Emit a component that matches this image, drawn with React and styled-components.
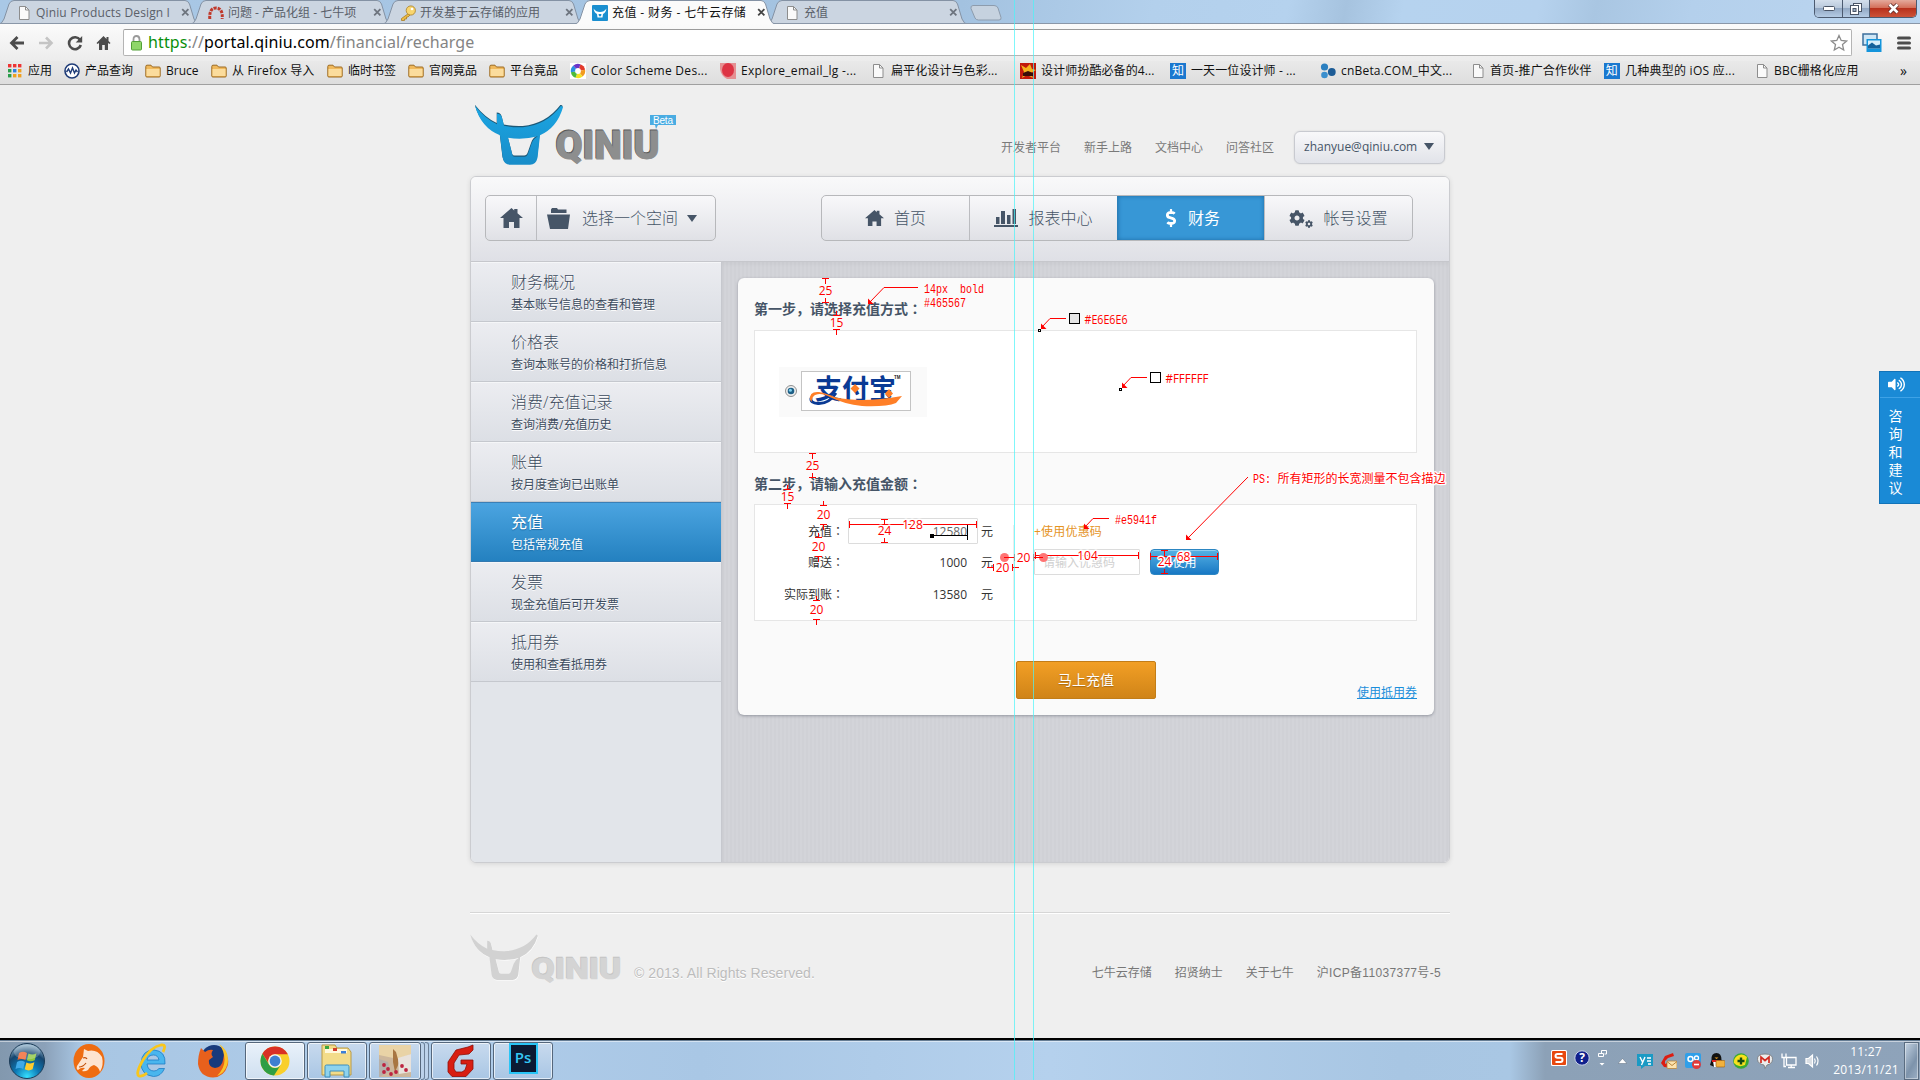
import React from 'react';
import styled, { createGlobalStyle, css } from 'styled-components';
import { FaCog, FaDollarSign, FaVolumeUp } from 'react-icons/fa';

const UI = `"Open Sans", "Noto Sans CJK SC", sans-serif`;
const MONO = `"Liberation Mono", "Noto Sans CJK SC", monospace`;

const Global = createGlobalStyle`
  html, body { margin: 0; padding: 0; overflow: hidden; }
  body { font-family: ${UI}; font-size: 12px; color: #333; }
  * { box-sizing: border-box; }
  svg { display: block; flex: none; }
`;

const Desktop = styled.div`
  position: relative;
  width: 1920px;
  height: 1080px;
  display: flex;
  flex-direction: column;
  overflow: hidden;
  background: #000;
`;

/* ---------- browser chrome ---------- */

const TabStrip = styled.div`
  display: flex;
  align-items: flex-start;
  height: 24px;
  flex: none;
  padding-left: 3px;
  background: linear-gradient(100deg, #a9c8e6 0%, #a3c2e0 50%, #b3d0ec 60%, #b5d2ee 67%, #a6c3df 70%, #b6d3ef 73%, #b6d2ee 80%, #a9c6e2 83%, #b4d0ec 88%, #bcd6f0 100%);
  box-shadow: inset 0 -1px 0 #8a97a8;
`;

const TabBox = styled.div`
  position: relative;
  display: flex;
  align-items: center;
  width: 192px;
  height: 24px;
  padding: 1px 5px 0 13px;
  color: ${(p) => (p.$active ? '#111' : '#5a6069')};
  line-height: 18px;
  z-index: ${(p) => (p.$active ? 2 : 1)};
`;

const TabShape = styled.svg`
  position: absolute;
  left: -5px;
  top: 0;
  z-index: -1;
`;

const TabLabel = styled.span`
  flex: 1;
  margin-left: 4px;
  overflow: hidden;
  white-space: nowrap;
  letter-spacing: ${(p) => p.$ls || 0}px;
`;

const TabClose = styled.svg`
  margin-left: 8px;
`;

const NewTab = styled.svg`
  margin: 5px 0 0 7px;
`;

const WindowButtons = styled.div`
  display: flex;
  margin-left: auto;
  margin-right: 3px;
  height: 18px;
  border: 1px solid #4c5b70;
  border-top: 0;
  border-radius: 0 0 5px 5px;
  overflow: hidden;
`;

const WindowButton = styled.div`
  display: flex;
  align-items: center;
  justify-content: center;
  width: ${(p) => p.$w}px;
  border-left: ${(p) => (p.$first ? 0 : '1px solid #4c5b70')};
  background: ${(p) =>
    p.$close
      ? 'linear-gradient(#e4aa9c 0%, #d4705a 45%, #b8311c 50%, #cc5238 100%)'
      : 'linear-gradient(#d3dfec 0%, #b9c9dc 45%, #93a9c4 50%, #b4cbe4 100%)'};
`;

const Toolbar = styled.div`
  display: flex;
  align-items: center;
  flex: none;
  height: 37px;
  padding: 0 8px 0 9px;
  background: linear-gradient(#fbfbfb, #ececec);
`;

const NavIcons = styled.div`
  display: flex;
  gap: 13px;
  width: 114px;
`;

const Omnibox = styled.div`
  display: flex;
  align-items: center;
  width: 1729px;
  height: 27px;
  padding: 0 3px 0 7px;
  border: 1px solid #b4b4b4;
  border-top-color: #9b9b9b;
  border-radius: 2px;
  background: #fff;
`;

const Url = styled.span`
  flex: 1;
  margin: -2px 0 0 6px;
  font-family: "Noto Sans", sans-serif;
  font-size: 16px;
  line-height: 22px;
  letter-spacing: 0.12px;
  color: #848484;
  b { font-weight: 400; color: #0a8f0a; }
  i { font-style: normal; color: #000; }
`;

const ToolEnd = styled.div`
  display: flex;
  align-items: center;
  gap: 15px;
  margin-left: 10px;
`;

const BookmarkBar = styled.div`
  display: flex;
  align-items: center;
  flex: none;
  height: 24px;
  padding: 0 0 3px 8px;
  background: linear-gradient(#e9e9e9, #dedede);
  border-bottom: 1px solid #a0a0a0;
  color: #111;
`;

const Bookmark = styled.div`
  display: flex;
  align-items: center;
  gap: ${(p) => p.$gap || 5}px;
  width: ${(p) => p.$w}px;
  flex: none;
  line-height: 18px;
  white-space: nowrap;
  letter-spacing: ${(p) => p.$ls || 0}px;
`;

const BookmarkMore = styled.span`
  margin-left: -3px;
  font-size: 14px;
  line-height: 16px;
`;

const ZhiIcon = styled.span`
  width: 16px;
  height: 16px;
  background: #1a78cf;
  color: #fff;
  font-size: 12px;
  line-height: 16px;
  text-align: center;
`;

/* ---------- page ---------- */

const Page = styled.main`
  flex: none;
  height: 953px;
  background: #efefef;
  display: flex;
  flex-direction: column;
  align-items: center;
`;

const Column = styled.div`
  width: 980px;
`;

const Header = styled.header`
  display: flex;
  align-items: flex-start;
  height: 91px;
  padding: 20px 5px 0;
`;

const HeaderLinks = styled.nav`
  display: flex;
  gap: 23px;
  margin: 34px 20px 0 auto;
  color: #7a7a7a;
  line-height: 18px;
`;

const UserMenu = styled.div`
  display: flex;
  align-items: center;
  justify-content: space-between;
  width: 151px;
  height: 33px;
  margin-top: 26px;
  padding: 0 10px 2px 9px;
  border: 1px solid #c8cad0;
  border-radius: 6px;
  background: linear-gradient(#f8f8fa, #e1e3e9);
  box-shadow: 0 0 2px rgba(0, 0, 0, 0.12);
  color: #465567;
`;

const Panel = styled.section`
  height: 687px;
  border: 1px solid #cbccd0;
  border-radius: 6px;
  overflow: hidden;
  display: flex;
  flex-direction: column;
  box-shadow: 0 1px 5px rgba(0, 0, 0, 0.1);
`;

const PanelHead = styled.div`
  display: flex;
  justify-content: space-between;
  height: 85px;
  flex: none;
  padding: 18px 36px 0 14px;
  background: linear-gradient(#f9f9fa, #dfe0e6);
  border-bottom: 1px solid #c6c7cc;
`;

const Group = styled.div`
  display: flex;
  height: 46px;
  border: 1px solid #b7b8bb;
  border-radius: 5px;
  background: linear-gradient(#f8f8fa, #e0e1e6);
  overflow: hidden;
`;

const Segment = styled.div`
  display: flex;
  align-items: center;
  justify-content: ${(p) => (p.$left ? 'flex-start' : 'center')};
  gap: ${(p) => p.$gap || 10}px;
  width: ${(p) => p.$w}px;
  padding-left: ${(p) => (p.$left ? 10 : 0)}px;
  border-left: ${(p) => (p.$first ? 0 : '1px solid #bbbcc0')};
  font-size: 16px;
  font-weight: 300;
  line-height: 24px;
  color: #465567;
  white-space: nowrap;
  ${(p) =>
    p.$active &&
    css`
      color: #fff;
      font-weight: 400;
      background: #3797d6;
      border-left-color: #2a7fb9;
      box-shadow: inset 0 0 4px #1c6ca6;
    `}
`;

const PanelBody = styled.div`
  display: flex;
  flex: 1;
`;

const Sidebar = styled.aside`
  width: 251px;
  flex: none;
  background: #e2e5ea;
  border-right: 1px solid #c6c8ce;
`;

const MenuItem = styled.div`
  height: 60px;
  padding: 8px 0 0 40px;
  border-bottom: 1px solid ${(p) => (p.$active ? '#3379b0' : '#c5c8ce')};
  background: ${(p) => (p.$active ? 'linear-gradient(#4ca5e1, #2481c0)' : 'linear-gradient(#ecedf1, #dcdfe5)')};
  box-shadow: ${(p) => (p.$active ? 'inset 0 1px 0 #3b7fb6' : 'inset 0 1px 0 #f5f6f8')};
  color: ${(p) => (p.$active ? '#fff' : '#3c4b5d')};
  text-shadow: ${(p) => (p.$active ? '0 1px 1px #1c6ca6' : '0 1px 0 #fff')};
`;

const MenuTitle = styled.div`
  font-size: 16px;
  font-weight: ${(p) => (p.$active ? 400 : 300)};
  line-height: 24px;
`;

const MenuHint = styled.div`
  font-size: 12px;
  line-height: 22px;
`;

const Content = styled.div`
  flex: 1;
  padding: 16px;
  background: repeating-linear-gradient(90deg, #d0d1d6 0 2px, #d3d4d9 2px 4px);
  box-shadow: inset 0 2px 4px rgba(0, 0, 0, 0.04);
`;

const Card = styled.div`
  display: flex;
  flex-direction: column;
  width: 696px;
  height: 437px;
  padding: 21px 16px 0;
  background: #fafafa;
  border-radius: 6px;
  box-shadow: 0 1px 3px rgba(70, 75, 90, 0.45);
`;

const StepTitle = styled.h2`
  margin: 0;
  height: 31px;
  font-size: 14px;
  font-weight: 700;
  line-height: ${(p) => p.$lh || 20}px;
  color: #465567;
`;

/* Full-width colon centred in its cell. */
const Mark = styled.span`
  font-family: "Noto Sans CJK TC", sans-serif;
  line-height: 1;
`;

const Box = styled.div`
  display: flex;
  width: 663px;
  height: ${(p) => p.$h}px;
  margin-bottom: ${(p) => p.$mb}px;
  border: 1px solid #e6e6e6;
  background: #fff;
`;

const PayOption = styled.label`
  display: flex;
  align-items: center;
  gap: 4px;
  width: 148px;
  height: 50px;
  margin: 36px 0 0 24px;
  padding: 0 0 3px 6px;
  background: #fafafa;
`;

const PayLogo = styled.div`
  width: 110px;
  height: 40px;
  border: 1px solid #c4c4c4;
  background: #fff;
`;

const Amounts = styled.div`
  display: grid;
  grid-template-columns: 90px 130px 20px;
  grid-template-rows: 26px 26px 26px;
  row-gap: 6px;
  column-gap: 3px;
  align-items: center;
  margin-top: 13px;
  line-height: 18px;
  color: #333;
  > span:nth-child(-n + 3) { padding-top: 2px; }
`;

const AmountLabel = styled.span`
  text-align: right;
  padding-right: 1px;
  white-space: nowrap;
`;

const AmountValue = styled.span`
  text-align: right;
  padding-right: 11px;
`;

const Field = styled.div`
  display: flex;
  align-items: center;
  justify-content: ${(p) => (p.$right ? 'flex-end' : 'flex-start')};
  width: ${(p) => p.$w}px;
  height: 26px;
  padding: ${(p) => (p.$right ? '2px 10px 0 0' : '2px 0 0 8px')};
  border: 1px solid #dcdcdc;
  border-radius: 1px;
  background: #fff;
  color: ${(p) => (p.$right ? '#666' : '#d0d0d0')};
  line-height: 18px;
`;

const Rule = styled.div`
  width: 1px;
  height: 75px;
  margin: 20px 20px 0 12px;
  background: #ececec;
`;

const Coupon = styled.div`
  display: flex;
  flex-direction: column;
  padding-top: 18px;
  line-height: 18px;
`;

const CouponLink = styled.a`
  color: #e5941f;
  height: 26px;
  letter-spacing: 0.2px;
`;

const CouponRow = styled.div`
  display: flex;
  gap: 10px;
`;

const UseButton = styled.button`
  width: 69px;
  height: 26px;
  padding: 2px 0 0;
  border: 1px solid #2c86c2;
  border-radius: 4px;
  background: linear-gradient(#56b2e4, #1878c4);
  box-shadow: inset 0 1px 0 #8dcdf0;
  color: #fff;
  font: 12px/18px ${UI};
`;

const Actions = styled.div`
  display: flex;
  align-items: flex-start;
  justify-content: flex-end;
  width: 663px;
`;

const PayButton = styled.button`
  width: 140px;
  height: 38px;
  margin-right: 201px;
  padding: 0;
  border: 1px solid #c27d18;
  border-radius: 2px;
  background: linear-gradient(#f29f25, #d08418);
  color: #fff;
  font: 14px/20px ${UI};
  text-shadow: 0 1px 1px rgba(120, 70, 0, 0.5);
`;

const VoucherLink = styled.a`
  margin-top: 23px;
  color: #1a8fdb;
  line-height: 18px;
  text-decoration: underline;
`;

const Footer = styled.footer`
  display: flex;
  align-items: flex-start;
  width: 980px;
  height: 76px;
  margin-top: 49px;
  padding-top: 21px;
  border-top: 1px solid #d6d6d6;
  box-shadow: inset 0 1px 0 #fff;
`;

const Copyright = styled.span`
  margin: 29px 0 0 12px;
  font: 14px/20px "Liberation Sans", sans-serif;
  letter-spacing: 0.06px;
  color: #bcbcbc;
  text-shadow: 0 1px 0 #fff;
`;

const FooterLinks = styled.div`
  display: flex;
  gap: 23px;
  margin: 30px 9px 0 auto;
  color: #777;
  font-family: "Liberation Sans", "Noto Sans CJK SC", sans-serif;
  line-height: 18px;
`;

const FooterLink = styled.span`
  letter-spacing: ${(p) => p.$ls || 0}px;
`;

/* ---------- taskbar ---------- */

const Taskbar = styled.div`
  display: flex;
  align-items: center;
  flex: none;
  height: 40px;
  margin-top: 2px;
  background: linear-gradient(90deg, #8298ae 0, #8ba1b9 45px, #a8c6e3 80px, #b0cdea 400px, #a9c7e5 700px, #b5d1ed 1050px, #a8c6e3 1400px, #a9c7e4 1510px, #8ca1b7 1545px, #8ea3ba 1920px);
  border-top: 1px solid #667d94;
  box-shadow: inset 0 1px 0 rgba(255, 255, 255, 0.5);
`;

const TaskSlot = styled.div`
  display: flex;
  align-items: center;
  justify-content: center;
  width: ${(p) => p.$w}px;
  height: 38px;
  margin-right: ${(p) => p.$mr || 0}px;
  ${(p) =>
    p.$open &&
    css`
      border: 1px solid #55677c;
      border-radius: 3px;
      background: ${p.$bright ? 'linear-gradient(#e9f1fa, #cfdff0)' : 'linear-gradient(#c8daee, #a9c6e4)'};
      box-shadow: inset 0 0 0 1px rgba(255, 255, 255, 0.65);
    `}
`;

const StackEdge = styled.div`
  width: 4px;
  height: 38px;
  border: 1px solid #6b8098;
  border-left: 0;
  border-radius: 0 3px 3px 0;
  background: #bcd2ea;
  margin-right: ${(p) => p.$mr || 0}px;
`;

const PsTile = styled.div`
  width: 29px;
  height: 31px;
  margin-bottom: 4px;
  border: 2px solid #29c5f6;
  background: #0b1a33;
  color: #35c8f5;
  font-size: 15px;
  font-weight: 600;
  line-height: 25px;
  text-align: center;
`;

const Tray = styled.div`
  display: flex;
  align-items: center;
  margin-left: auto;
`;

const TrayCell = styled.div`
  display: flex;
  align-items: center;
  justify-content: center;
  width: ${(p) => p.$w || 24}px;
  height: 34px;
  padding-bottom: ${(p) => p.$up || 0}px;
`;

const Clock = styled.div`
  display: flex;
  flex-direction: column;
  align-items: center;
  width: 79px;
  padding: 1px 0 0 3px;
  color: #fff;
  line-height: 18px;
  letter-spacing: 0.2px;
`;

const ShowDesktop = styled.div`
  width: 15px;
  height: 38px;
  margin-right: 1px;
  border: 1px solid #5a6c80;
  background: linear-gradient(120deg, #c3d2e2, #7d93ab 60%, #9db0c5);
  box-shadow: inset 0 0 0 1px rgba(255, 255, 255, 0.4);
`;

/* ---------- overlays ---------- */

const SideTab = styled.div`
  position: absolute;
  right: 0;
  top: 371px;
  width: 41px;
  height: 133px;
  display: flex;
  flex-direction: column;
  align-items: center;
  background: #1a8ad6;
  border: 1px solid #1273b8;
  border-right: 0;
  color: #fff;
`;

const SideTabIcon = styled.div`
  display: flex;
  align-items: center;
  justify-content: center;
  align-self: stretch;
  height: 26px;
  padding-right: 7px;
  border-bottom: 1px solid #3ea2e6;
`;

const SideTabText = styled.div`
  width: 16px;
  margin: 9px 9px 0 0;
  font-size: 14px;
  line-height: 18px;
  text-align: center;
`;

const Overlay = styled.svg`
  position: absolute;
  left: 0;
  top: 0;
  pointer-events: none;
`;

const RedText = styled.text`
  fill: #f00;
  font-family: ${(p) => (p.$mono ? MONO : UI)};
  font-size: 12px;
  paint-order: stroke;
  stroke: ${(p) => (p.$halo ? '#fff' : 'none')};
  stroke-width: ${(p) => p.$halo || 0}px;
  stroke-linejoin: round;
  white-space: pre;
`;

/* ---------- drawings ---------- */

const DocIcon = () => (
  <svg width="16" height="16" viewBox="0 0 16 16">
    <path d="M3.500 1.500h6l3.500 3.500v9.500h-9.500z" fill="#fafafa" stroke="#8d8d8d" />
    <path d="M9.500 1.500v3.500h3.500" fill="none" stroke="#8d8d8d" />
  </svg>
);

const FolderIcon = () => (
  <svg width="16" height="16" viewBox="0 0 16 16">
    <path d="M.8 3.500q0-1.300 1.200-1.300h4l1.500 1.800h6.700q1 0 1 1v8q0 1-1 1h-12.400q-1 0-1-1z" fill="#f0b95c" stroke="#9c6a22" />
    <path d="M1.500 6h13v7h-13z" fill="#fbdc9c" />
  </svg>
);

const CloseX = ({ color }) => (
  <TabClose width="9" height="9" viewBox="0 0 9 9">
    <path d="M1.200 1.200l6.200 6.200M7.400 1.200l-6.200 6.200" stroke={color} strokeWidth="1.800" />
  </TabClose>
);

const bullPath =
  'M0 0Q10 13 22 18.500L22 8Q26 8 27 12L29 20Q38 22 48 21.500Q72 19 86 0L88 1.500Q82 22 65 29.500L62.500 52Q61 59 55 59L35 59Q29 59 27.700 52L25 29.500Q6 22 0 0ZM33 32L37.500 49.500Q38 51 40 51L49.500 51Q52 51 53 48L56.500 38Q58 33 63 30.500Q48 34.500 33 32Z';

const Logo = ({ muted }) => {
  const layers = muted ? ['#c2c2c2', '#d4d4d4'] : ['#555', '#8d8e8e'];
  return (
    <svg width={muted ? 152 : 202} height={muted ? 50 : 62} viewBox={muted ? '0 0 197 65' : '0 0 202 62'}>
      <defs>
        <linearGradient id="bull" x1="0" y1="0" x2="0" y2="1">
          <stop offset="0" stopColor="#1ba5e2" />
          <stop offset="1" stopColor="#188dc9" />
        </linearGradient>
      </defs>
      <path
        d={bullPath}
        fill={muted ? '#fff' : '#1c5877'}
        fillRule="evenodd"
        transform={muted ? 'translate(.5 1.500)' : 'translate(-.3 -.5)'}
      />
      <path d={bullPath} fill={muted ? '#d2d2d2' : 'url(#bull)'} fillRule="evenodd" transform="translate(0 .7)" />
      {layers.map((color, i) => (
        <text
          key={color}
          x={(muted ? 79 : 80) + i * 0.8}
          y={(muted ? 57 : 53) + i}
          fontFamily="Roboto, sans-serif"
          fontWeight="900"
          fontSize={muted ? 39 : 38}
          textLength={muted ? 117 : 104}
          lengthAdjust="spacingAndGlyphs"
          fill={color}
          stroke={color}
          strokeWidth=".8"
        >
          QINIU
        </text>
      ))}
      {!muted && (
        <g>
          <path d="M175 10h26v10h-18l-2 4-1-4h-5z" fill="#4aace2" />
          <text x="178" y="19" fontFamily="Liberation Sans, sans-serif" fontSize="10" fill="#fff" textLength="20">
            Beta
          </text>
        </g>
      )}
    </svg>
  );
};

const HomeIcon = ({ w = 23 }) => (
  <svg width={w} height={(w * 20) / 23} viewBox="0 0 23 20">
    <path d="M11.500 0L0 10h3.500v10h5.500v-6h5v6h5.500v-10h3.500l-5.500-4.800v-4.200h-3.300v1.600z" fill="#465567" />
  </svg>
);

const OpenFolder = () => (
  <svg width="23" height="21" viewBox="0 0 23 21">
    <path d="M4 5v-3.500l1-1.500h5l1 1.500h8.500v3.500z M0 6.500h23l-2 14.500h-18z" fill="#465567" />
  </svg>
);

const ChartIcon = () => (
  <svg width="24" height="18" viewBox="0 0 24 18">
    <path d="M2 8h3.500v7h-3.500zM7 2h4v13h-4zM13 6h3.500v9h-3.500zM18.500 0h3.500v15h-3.500zM0 16h24v2h-24z" fill="#465567" />
  </svg>
);

const Gears = styled.span`
  display: flex;
  align-items: flex-end;
  svg + svg { margin-bottom: -2px; }
`;

const CaretSvg = styled.svg`
  margin-left: ${(p) => p.$ml || 0}px;
`;

const Caret = ({ ml }) => (
  <CaretSvg width="10" height="7" viewBox="0 0 10 7" $ml={ml}>
    <path d="M0 0h10l-5 7z" fill="#465567" />
  </CaretSvg>
);

const Radio = () => (
  <svg width="12" height="12" viewBox="0 0 12 12">
    <circle cx="6" cy="6" r="5.500" fill="#eee" stroke="#8e8f8f" />
    <circle cx="6" cy="6" r="3.300" fill="#1d5f86" />
    <circle cx="5.400" cy="5.200" r="1.500" fill="#7fd0ee" />
  </svg>
);

const Alipay = () => (
  <svg width="108" height="38" viewBox="0 0 108 38" overflow="visible">
    <text x="13" y="26.500" fontFamily="Noto Sans CJK SC, sans-serif" fontWeight="700" fontSize="27" textLength="81" fill="#0a3a94">
      支付宝
    </text>
    <path d="M34 21Q27 32 16 31.500Q8 31 9 26" fill="none" stroke="#0a3a94" strokeWidth="2.800" />
    <path d="M8 28Q7 19 17 20Q24 21 34 25.500Q60 31 100 24L94 31Q84 35 60 34Q42 32 29 25.500Q16 19 11 25Q9 28 10 30Z" fill="#ff7f27" />
    <path d="M53 12l4.500 4.500-4.500 4.500-4.500-4.500zM87 17l4 4.500-4 4.500-4-4.500z" fill="#ff7f27" />
    <text x="92" y="7" fontFamily="Liberation Sans, sans-serif" fontWeight="700" fontSize="4.500" fill="#222">TM</text>
  </svg>
);

const ChromeBall = () => (
  <svg width="30" height="32" viewBox="-15 -15 30 30">
    <circle r="14.500" fill="#f9cf2b" />
    <path d="M-12.600 -7.200A14.500 14.500 0 0 1 12.800 -6.700H0A6.800 6.800 0 0 0-6.500 2z" fill="#d93025" />
    <path d="M-12.600 -7.200A14.500 14.500 0 0 0-1 14.500L6 3.500A6.800 6.800 0 0 1-6 3.500z" fill="#2f9e44" />
    <circle r="6.800" fill="#f4f4f4" />
    <circle r="5.400" fill="#3f7fd0" />
  </svg>
);

const StartOrb = () => (
  <svg width="38" height="38" viewBox="0 0 38 38">
    <defs>
      <radialGradient id="orb" cx=".5" cy=".95" r=".9">
        <stop offset="0" stopColor="#35e0ff" />
        <stop offset=".4" stopColor="#0c78b4" />
        <stop offset=".75" stopColor="#16456e" />
        <stop offset="1" stopColor="#8fb0c8" />
      </radialGradient>
    </defs>
    <circle cx="19" cy="19" r="17.500" fill="url(#orb)" stroke="#1c3c58" />
    <path d="M11 11q4-2.500 8 0l-1.600 7q-4-2-7.900 0z" fill="#f0622b" />
    <path d="M20.500 11.500q4 2 8-.3l-1.800 7q-4 2-7.800 0z" fill="#8cc63e" />
    <path d="M9 20q4-2.400 7.900 0l-1.700 7q-3.700-2.200-7.700 0z" fill="#3fa9e8" />
    <path d="M18.400 20.500q4 2 8-.2l-1.800 7q-4 2.200-7.900 0z" fill="#fdcb2e" />
    <ellipse cx="19" cy="10" rx="13" ry="7.500" fill="#fff" opacity=".22" />
  </svg>
);

const Cheetah = () => (
  <svg width="32" height="36" viewBox="0 0 32 36">
    <ellipse cx="16" cy="18" rx="15.500" ry="17" fill="#ee6c11" />
    <path d="M11 6L15 8Q24 6 29 14Q31 22 27 29Q26 24 21 22Q17 23 15 27Q12 29 9 28L12 25Q8 24 5 27Q3 26 4 23L10 14Z" fill="#fde4d0" />
    <path d="M10 15q3-1 4 1M6 24q4 0 7-4" stroke="#c24d06" strokeWidth="1.200" fill="none" />
  </svg>
);

const IeIcon = () => (
  <svg width="32" height="36" viewBox="0 0 32 36">
    <path d="M29 21H11Q12 28 18 28Q21 28 23 25.500H28.500Q25 33.500 17.500 33.500Q5 32 5 20Q6 7 18 7Q30 8 29 21ZM11 17H23Q22 12 17.500 12Q12 12 11 17Z" fill="#49b6ee" stroke="#1e7cc4" strokeWidth=".8" />
    <path d="M27 9Q31 1 25 2Q15 4 7 17Q-1 31 3 33Q6 34 11 30" fill="none" stroke="#f9c61c" strokeWidth="2.800" />
  </svg>
);

const Firefox = () => (
  <svg width="32" height="36" viewBox="0 0 32 36">
    <circle cx="17" cy="15" r="13" fill="#173a7c" />
    <path d="M27 9Q33 15 30.500 23Q27 34 16 34.500Q3 34 1 21Q1 12 4 5L8 9Q12 6 16 7Q13 11 16 14L12 17Q11 24 18 25Q25 24 26 17Q27 13 27 9Z" fill="#e8601c" />
    <path d="M22 1Q33 8 30.500 21Q28 30 20 33Q28 25 27.500 16Q27 7 22 1Z" fill="#fbc42a" />
  </svg>
);

const ExplorerIcon = () => (
  <svg width="34" height="34" viewBox="0 0 34 34">
    <path d="M2 1h13l2 3h11l3 4v23h-29z" fill="#f3dc8a" stroke="#b99a44" />
    <path d="M5 5h22v4h-22z" fill="#fff8dc" />
    <path d="M5 2h4v3h-4z" fill="#3aa640" />
    <path d="M13 4h4v3h-4z" fill="#d23c2a" />
    <path d="M21 7h5v2.500h-5z" fill="#3c7fd6" />
    <path d="M5 33V22.500q0-1.500 1.500-1.500h21q1.500 0 1.500 1.500v10.500h-5v-6H10v6z" fill="#8ed3ee" stroke="#3c8ebc" />
  </svg>
);

const berries = [[5, 20], [9, 24], [5, 27], [23, 21], [27, 25], [17, 27], [12, 29]];

const Photo = () => (
  <svg width="32" height="32" viewBox="0 0 32 32">
    <rect width="32" height="32" fill="#cdb79c" />
    <path d="M0 0h32v9l-13 5-19-4z" fill="#e9d3a6" />
    <path d="M14 4l3 3 3 11-4 9-2-10z" fill="#a87642" />
    <path d="M19 13l13-4v18l-12 2z" fill="#e8e2dc" />
    <path d="M0 14l9 3 2 9-11 6z" fill="#b5b0ab" />
    {berries.map(([x, y]) => (
      <circle key={`${x}-${y}`} cx={x} cy={y} r="1.900" fill="#bd2440" />
    ))}
  </svg>
);

const RedG = () => (
  <svg width="28" height="34" viewBox="0 0 28 34">
    <path d="M26 1L21 3L9 6L1 18V28L5 32.500H19L26 25V16H14V20H20L18 26L15 28H9L7 25V19L12 11L22 10L26 6Z" fill="#d81e12" stroke="#8f0f08" strokeWidth=".8" />
  </svg>
);

const favicons = {
  arc: (
    <svg width="16" height="16" viewBox="0 0 16 16">
      <path d="M1.800 14Q1 3 8 3Q15 3 14.200 14" fill="none" stroke="#c0392b" strokeWidth="3" strokeDasharray="3 1" />
    </svg>
  ),
  key: (
    <svg width="16" height="16" viewBox="0 0 16 16">
      <path d="M8.500 8.500l-7 5v2h3v-1.500h2v-2h1.500l2-2z" fill="#eebc45" stroke="#a87d24" strokeWidth=".8" />
      <circle cx="10.800" cy="5.500" r="4.600" fill="#f8d56e" stroke="#a87d24" strokeWidth=".8" />
      <circle cx="12" cy="4" r="1.300" fill="#fff" />
    </svg>
  ),
  bull: (
    <svg width="16" height="16" viewBox="0 0 16 16">
      <rect width="16" height="16" rx="1" fill="#1a8fd0" />
      <path d="M1.500 3.500Q4 7 8 7Q12 7 14.500 3.500Q13.500 8 11 9L10.500 12.500H5.500L5 9Q2.500 8 1.500 3.500Z" fill="#fff" />
      <path d="M6.500 9h3l-.5 2.300h-2z" fill="#1a8fd0" />
    </svg>
  ),
  doc: <DocIcon />,
};

const tabs = [
  { icon: 'doc', text: 'Qiniu Products Design I', ls: 0.15 },
  { icon: 'arc', text: '问题 - 产品化组 - 七牛项' },
  { icon: 'key', text: '开发基于云存储的应用' },
  { icon: 'bull', text: '充值 - 财务 - 七牛云存储', active: true, ls: 0.4 },
  { icon: 'doc', text: '充值' },
];

const Tab = ({ icon, text, active, ls }) => (
  <TabBox $active={active}>
    <TabShape width="204" height="24" viewBox="0 0 204 24">
      <path
        d="M0 24.500Q4 24 6 19L11 4Q12.500 .5 16 .5H187Q190 .5 191.500 4L196 19Q198 24 202 24.500Z"
        fill={active ? '#fbfbfb' : '#cbd5e1'}
        stroke="#8492a4"
      />
      {!active && <path d="M0 23.500H204" stroke="#8a97a8" />}
    </TabShape>
    {favicons[icon]}
    <TabLabel $ls={ls}>{text}</TabLabel>
    <CloseX color={active ? '#444' : '#6d747e'} />
  </TabBox>
);

const appDots = ['#e33', '#e33', '#e33', '#2a9d4a', '#2f7fe0', '#f0a020', '#2a9d4a', '#f0a020', '#f0a020'];
const wheelColors = ['#e33a2c', '#f29a1f', '#f3e324', '#4dbb3a', '#2a8fe0', '#6a35c9'];

const bookmarkIcons = {
  apps: (
    <svg width="14" height="14" viewBox="0 0 14 14">
      {appDots.map((c, i) => (
        <rect key={i} x={(i % 3) * 5} y={Math.floor(i / 3) * 5} width="3.400" height="3.400" fill={c} />
      ))}
    </svg>
  ),
  wave: (
    <svg width="16" height="16" viewBox="0 0 16 16">
      <circle cx="8" cy="8" r="7" fill="#fff" stroke="#1f3c78" strokeWidth="1.600" />
      <path d="M2.500 9l2-3 2 4 2-5 2 5 1.500-3 1.500 2" fill="none" stroke="#1f3c78" strokeWidth="1.400" />
    </svg>
  ),
  folder: <FolderIcon />,
  doc: <DocIcon />,
  wheel: (
    <svg width="16" height="16" viewBox="0 0 16 16">
      <rect width="16" height="16" fill="#fff" />
      {wheelColors.map((c, i) => (
        <path key={c} d="M8 8L8 .8A7.200 7.200 0 0 1 14.240 4.400Z" fill={c} transform={`rotate(${i * 60 + 20} 8 8)`} />
      ))}
      <circle cx="8" cy="8" r="2.900" fill="#fff" />
    </svg>
  ),
  red: (
    <svg width="16" height="16" viewBox="0 0 16 16">
      <path d="M0 0h16v16h-9q-6-3-7-10z" fill="#e59092" />
      <ellipse cx="8" cy="7" rx="6" ry="7" fill="#dd3444" />
    </svg>
  ),
  fire: (
    <svg width="16" height="16" viewBox="0 0 16 16">
      <rect width="16" height="16" fill="#c2180c" />
      <path d="M1 2l5 3 4-4 2 5 4 1-5 3 2 5-6-3-5 3 2-6z" fill="#f5b11c" />
      <path d="M3 10l5-2 5 2v3h-10z" fill="#3a0d08" />
    </svg>
  ),
  zhi: <ZhiIcon>知</ZhiIcon>,
  cn: (
    <svg width="16" height="16" viewBox="0 0 16 16">
      <circle cx="4.500" cy="4" r="3.600" fill="#2b7fc0" />
      <circle cx="11.800" cy="9" r="3.900" fill="#1d5c96" />
      <circle cx="4.500" cy="12" r="3.300" fill="#3a8fce" />
    </svg>
  ),
};

const bookmarks = [
  ['apps', '应用', 56, 6],
  ['wave', '产品查询', 81],
  ['folder', 'Bruce', 66],
  ['folder', '从 Firefox 导入', 116, 5, 0.15],
  ['folder', '临时书签', 81],
  ['folder', '官网竟品', 81],
  ['folder', '平台竟品', 81],
  ['wheel', 'Color Scheme Des...', 150, 5, 0.3],
  ['red', 'Explore_email_lg -...', 150, 5, 0.3],
  ['doc', '扁平化设计与色彩...', 150, 5, 0.1],
  ['fire', '设计师扮酷必备的4...', 150, 5, 0.1],
  ['zhi', '一天一位设计师 - ...', 150, 5, 0.1],
  ['cn', 'cnBeta.COM_中文...', 150, 5, 0.2],
  ['doc', '首页-推广合作伙伴', 134, 4, 0.2],
  ['zhi', '几种典型的 iOS 应...', 150, 5, 0.25],
  ['doc', 'BBC栅格化应用', 149, 4, 0.2],
];

const menu = [
  ['财务概况', '基本账号信息的查看和管理'],
  ['价格表', '查询本账号的价格和打折信息'],
  ['消费/充值记录', '查询消费/充值历史'],
  ['账单', '按月度查询已出账单'],
  ['充值', '包括常规充值'],
  ['发票', '现金充值后可开发票'],
  ['抵用券', '使用和查看抵用券'],
];

/* Vertical gap marker: stems point at the label, or away from it when `out` is set. */
const VGap = ({ x, top, bottom, label, y, out, halo }) => {
  const s = out ? -5 : 5;
  return (
    <g>
      <path
        d={`M${x - 3.5} ${top}h7M${x} ${top}v${s}M${x - 3.5} ${bottom}h7M${x} ${bottom}v${-s}`}
        stroke="#f00"
        shapeRendering="crispEdges"
      />
      <RedText x={x} y={y + 5} textAnchor="middle" $halo={halo ? 3 : 0}>
        {label}
      </RedText>
    </g>
  );
};

const HSpan = ({ x1, x2, y, label, cx }) => (
  <g>
    <path d={`M${x1} ${y}H${x2}M${x1 + 0.5} ${y - 3.5}v7M${x2 - 0.5} ${y - 3.5}v7`} stroke="#f00" shapeRendering="crispEdges" />
    <RedText x={cx} y={y + 4} textAnchor="middle" $halo={3}>
      {label}
    </RedText>
  </g>
);

const Leader = ({ points, tip: [x, y] }) => (
  <g>
    <polyline points={points} fill="none" stroke="#f00" />
    <path d={`M${x} ${y}v-5.500l5.500 5.500z`} fill="#f00" />
  </g>
);

const Annotations = () => (
  <Overlay width="1920" height="1080" viewBox="0 0 1920 1080">
    <VGap x={825.5} top={278.5} bottom={302.5} y={290} label="25" />
    <VGap x={836.5} top={315.5} bottom={329.5} y={322} label="15" out />
    <VGap x={812.5} top={453.5} bottom={477.5} y={465} label="25" />
    <VGap x={787.5} top={489.5} bottom={503.5} y={496} label="15" out />
    <VGap x={823.5} top={505.5} bottom={524.5} y={514} label="20" out />
    <VGap x={818.5} top={537.5} bottom={556.5} y={546} label="20" out />
    <VGap x={816.5} top={600.5} bottom={619.5} y={609} label="20" out />
    <HSpan x1={849} x2={977} y={524.5} cx={912.5} label="128" />
    <VGap x={884.5} top={519.5} bottom={542.5} y={530} label="24" halo />
    <HSpan x1={1035} x2={1139} y={555.5} cx={1087.5} label="104" />
    <HSpan x1={1150} x2={1218} y={556.5} cx={1183.5} label="68" />
    <VGap x={1164.5} top={550.5} bottom={573.5} y={561} label="24" halo />

    <circle cx="1004.500" cy="557.500" r="4.500" fill="#ff7474" />
    <circle cx="1043.500" cy="557.500" r="4.500" fill="#ff7474" />
    <path
      d="M1004 557.500h10M1014.500 554v7M1043 557.500h-9M1033.500 554v7M987 567.500h6M993.500 564v7M1013 567.500h6M1012.500 564v7"
      stroke="#f00"
      shapeRendering="crispEdges"
    />
    <RedText x="1023.500" y="561.500" textAnchor="middle" $halo={2}>20</RedText>
    <RedText x="1002.500" y="571.500" textAnchor="middle" $halo={2}>20</RedText>

    <Leader points="918,287.500 884,287.500 870,302" tip={[868, 304]} />
    <RedText x="924" y="292.500" textLength="60" lengthAdjust="spacingAndGlyphs" $mono>{'14px\u00a0\u00a0bold'}</RedText>
    <RedText x="924" y="307" textLength="42" lengthAdjust="spacingAndGlyphs" $mono>#465567</RedText>

    <Leader points="1066,318.500 1050,318.500 1042,327" tip={[1041, 329]} />
    <rect x="1069.500" y="313.500" width="10" height="10" fill="#E6E6E6" stroke="#000" />
    <rect x="1038.500" y="329.500" width="2" height="2" fill="#fff" stroke="#000" />
    <RedText x="1084.500" y="323.500" textLength="43" lengthAdjust="spacingAndGlyphs">#E6E6E6</RedText>

    <Leader points="1147,377.500 1131,377.500 1123,386" tip={[1122, 388]} />
    <rect x="1150.500" y="372.500" width="10" height="10" fill="#fff" stroke="#000" />
    <rect x="1119.500" y="388.500" width="2" height="2" fill="#fff" stroke="#000" />
    <RedText x="1165.500" y="382.500" textLength="43" lengthAdjust="spacingAndGlyphs">#FFFFFF</RedText>

    <Leader points="1248,477 1188,538" tip={[1186, 540]} />
    <RedText x="1253" y="482.500" textLength="18" lengthAdjust="spacingAndGlyphs" $mono $halo={2.5}>PS:</RedText>
    <RedText x="1277.500" y="482.500" $mono $halo={2.5}>所有矩形的长宽测量不包含描边</RedText>

    <Leader points="1109,518.500 1093,518.500 1085,527" tip={[1084, 529]} />
    <RedText x="1115" y="523.500" textLength="42" lengthAdjust="spacingAndGlyphs" $mono>#e5941f</RedText>

    <path d="M932 535.500h36M967.500 525v15" stroke="#000" shapeRendering="crispEdges" />
    <rect x="930" y="534" width="4" height="4" fill="#000" />

    <path d="M1014.500 0V1080M1033.500 0V1080" stroke="#4af4f8" strokeOpacity=".7" shapeRendering="crispEdges" />
  </Overlay>
);

export default function App() {
  return (
    <Desktop>
      <Global />
      <TabStrip>
        {tabs.map((t) => (
          <Tab key={t.icon + t.text} {...t} />
        ))}
        <NewTab width="32" height="16" viewBox="0 0 32 16">
          <path d="M3 .5H24Q27 .5 28 3L31 12.500Q31.500 15 29 15H8.500Q6 15 5 13L1 3.500Q.5 .5 3 .5Z" fill="#c6d2df" stroke="#8d9cad" />
        </NewTab>
        <WindowButtons>
          <WindowButton $w={27} $first>
            <svg width="12" height="5"><rect x=".5" y=".5" width="11" height="4" rx="1" fill="#fff" stroke="#4a5566" /></svg>
          </WindowButton>
          <WindowButton $w={27}>
            <svg width="13" height="12" fill="none" stroke="#4a5566">
              <rect x="3.500" y=".5" width="8" height="8" fill="#fff" />
              <rect x=".5" y="2.500" width="8" height="9" fill="#fff" />
              <rect x="3" y="5.500" width="3" height="3" fill="#9fb2c8" />
            </svg>
          </WindowButton>
          <WindowButton $w={47} $close>
            <svg width="13" height="11" viewBox="0 0 13 11">
              <path d="M2.500 1.500l8 8M10.500 1.500l-8 8" stroke="#5a2a28" strokeWidth="4.200" />
              <path d="M2.500 1.500l8 8M10.500 1.500l-8 8" stroke="#fff" strokeWidth="2.600" />
            </svg>
          </WindowButton>
        </WindowButtons>
      </TabStrip>

      <Toolbar>
        <NavIcons>
          <svg width="16" height="16" viewBox="0 0 16 16"><path d="M15 8H3M8.500 2L2.500 8l6 6" fill="none" stroke="#4c4c4c" strokeWidth="2.800" /></svg>
          <svg width="16" height="16" viewBox="0 0 16 16"><path d="M1 8h12M8 2.500L13.500 8 8 13.500" fill="none" stroke="#c4c4c4" strokeWidth="2.600" /></svg>
          <svg width="16" height="16" viewBox="0 0 16 16">
            <path d="M13 4.800A6 6 0 1 0 13.800 10" fill="none" stroke="#4c4c4c" strokeWidth="2.600" />
            <path d="M15.200 1v6.500h-6.500z" fill="#4c4c4c" />
          </svg>
          <svg width="15" height="16" viewBox="0 0 15 16"><path d="M7.500 1L.5 8l1 1L3 8v7h3.200v-5h2.600v5H12V8l1.500 1 1-1L12.500 6V2h-2v2z" fill="#4c4c4c" /></svg>
        </NavIcons>
        <Omnibox>
          <svg width="11" height="16" viewBox="0 0 11 16">
            <path d="M2.500 8V4.500Q2.500 1 5.500 1Q8.500 1 8.500 4.500V8" fill="none" stroke="#9a9a9a" strokeWidth="1.800" />
            <rect x=".5" y="6.500" width="10" height="8.500" rx="1" fill="#8fd66a" stroke="#52a038" />
          </svg>
          <Url><b>https</b>://<i>portal.qiniu.com</i>/financial/recharge</Url>
          <svg width="18" height="18" viewBox="0 0 18 18">
            <path d="M9 1.500l2.200 5 5.400.5-4.100 3.600 1.200 5.400L9 13.200 4.300 16l1.200-5.400L1.400 7l5.400-.5z" fill="#fff" stroke="#8c8c8c" strokeWidth="1.300" />
          </svg>
        </Omnibox>
        <ToolEnd>
          <svg width="20" height="20" viewBox="0 0 20 20">
            <rect x="1" y="1" width="14" height="11" fill="#cfe6f5" stroke="#3c6f9c" strokeWidth="1.500" />
            <rect x="4.500" y="6" width="15" height="13" fill="#1495dc" />
            <rect x="6" y="7.500" width="12" height="8" fill="#d9effa" />
            <path d="M6 15.500v-3l4-3 4 3 4-1v4z" fill="#15619a" />
          </svg>
          <svg width="14" height="14" viewBox="0 0 14 14">
            <path d="M1.500 2h11M1.500 7h11M1.500 12h11" stroke="#4c4c4c" strokeWidth="3" strokeLinecap="round" />
          </svg>
        </ToolEnd>
      </Toolbar>

      <BookmarkBar>
        {bookmarks.map(([icon, text, w, gap, ls]) => (
          <Bookmark key={text} $w={w} $gap={gap} $ls={ls}>
            {bookmarkIcons[icon]}
            <span>{text}</span>
          </Bookmark>
        ))}
        <BookmarkMore>»</BookmarkMore>
      </BookmarkBar>

      <Page>
        <Column>
          <Header>
            <Logo />
            <HeaderLinks>
              <span>开发者平台</span>
              <span>新手上路</span>
              <span>文档中心</span>
              <span>问答社区</span>
            </HeaderLinks>
            <UserMenu>
              <span>zhanyue@qiniu.com</span>
              <Caret />
            </UserMenu>
          </Header>

          <Panel>
            <PanelHead>
              <Group>
                <Segment $w={50} $first><HomeIcon /></Segment>
                <Segment $w={179} $left $gap={12}>
                  <OpenFolder />
                  <span>选择一个空间</span>
                  <Caret ml={-3} />
                </Segment>
              </Group>
              <Group>
                <Segment $w={147} $first><HomeIcon w={19} />首页</Segment>
                <Segment $w={148}><ChartIcon />报表中心</Segment>
                <Segment $w={147} $active $gap={8}><FaDollarSign size={18} />财务</Segment>
                <Segment $w={148}>
                  <Gears><FaCog size={16} /><FaCog size={8} /></Gears>
                  帐号设置
                </Segment>
              </Group>
            </PanelHead>
            <PanelBody>
              <Sidebar>
                {menu.map(([title, hint]) => (
                  <MenuItem key={title} $active={title === '充值'}>
                    <MenuTitle $active={title === '充值'}>{title}</MenuTitle>
                    <MenuHint>{hint}</MenuHint>
                  </MenuItem>
                ))}
              </Sidebar>
              <Content>
                <Card>
                  <StepTitle>第一步，请选择充值方式<Mark>：</Mark></StepTitle>
                  <Box $h={123} $mb={20}>
                    <PayOption>
                      <Radio />
                      <PayLogo><Alipay /></PayLogo>
                    </PayOption>
                  </Box>
                  <StepTitle $lh={22}>第二步，请输入充值金额<Mark>：</Mark></StepTitle>
                  <Box $h={117} $mb={40}>
                    <Amounts>
                      <AmountLabel>充值<Mark>：</Mark></AmountLabel>
                      <Field $w={130} $right>12580</Field>
                      <span>元</span>
                      <AmountLabel>赠送<Mark>：</Mark></AmountLabel>
                      <AmountValue>1000</AmountValue>
                      <span>元</span>
                      <AmountLabel>实际到账<Mark>：</Mark></AmountLabel>
                      <AmountValue>13580</AmountValue>
                      <span>元</span>
                    </Amounts>
                    <Rule />
                    <Coupon>
                      <CouponLink>+使用优惠码</CouponLink>
                      <CouponRow>
                        <Field $w={106}>请输入优惠码</Field>
                        <UseButton>使用</UseButton>
                      </CouponRow>
                    </Coupon>
                  </Box>
                  <Actions>
                    <PayButton>马上充值</PayButton>
                    <VoucherLink>使用抵用券</VoucherLink>
                  </Actions>
                </Card>
              </Content>
            </PanelBody>
          </Panel>
        </Column>

        <Footer>
          <Logo muted />
          <Copyright>© 2013. All Rights Reserved.</Copyright>
          <FooterLinks>
            <FooterLink>七牛云存储</FooterLink>
            <FooterLink>招贤纳士</FooterLink>
            <FooterLink>关于七牛</FooterLink>
            <FooterLink $ls={0.32}>沪ICP备11037377号-5</FooterLink>
          </FooterLinks>
        </Footer>
      </Page>

      <Taskbar>
        <TaskSlot $w={54}><StartOrb /></TaskSlot>
        <TaskSlot $w={69}><Cheetah /></TaskSlot>
        <TaskSlot $w={57}><IeIcon /></TaskSlot>
        <TaskSlot $w={65}><Firefox /></TaskSlot>
        <TaskSlot $w={60} $mr={2} $open $bright><ChromeBall /></TaskSlot>
        <TaskSlot $w={60} $mr={2} $open><ExplorerIcon /></TaskSlot>
        <TaskSlot $w={52} $open><Photo /></TaskSlot>
        <StackEdge />
        <StackEdge $mr={2} />
        <TaskSlot $w={60} $mr={2} $open><RedG /></TaskSlot>
        <TaskSlot $w={60} $open><PsTile>Ps</PsTile></TaskSlot>
        <Tray>
          <TrayCell $w={20} $up={5}>
            <svg width="16" height="16" viewBox="0 0 16 16">
              <rect width="16" height="16" rx="1.500" fill="#fff" />
              <rect x="1" y="1" width="14" height="14" rx="1" fill="#e8480f" />
              <path d="M11.500 4H6.500Q4.500 4 4.500 6Q4.500 7.800 6.500 7.800H9.500Q11.500 7.800 11.500 9.800Q11.500 12 9.500 12H4.500" fill="none" stroke="#fff" strokeWidth="2" />
            </svg>
          </TrayCell>
          <TrayCell $w={25} $up={5}>
            <svg width="16" height="16" viewBox="0 0 16 16">
              <circle cx="8" cy="8" r="7.200" fill="#10208c" stroke="#c8d0e8" />
              <text x="8" y="12.300" textAnchor="middle" fontFamily="Open Sans, sans-serif" fontWeight="700" fontSize="12" fill="#fff">?</text>
            </svg>
          </TrayCell>
          <TrayCell $w={18} $up={5}>
            <svg width="10" height="16" viewBox="0 0 10 16" fill="none" stroke="#fff">
              <path d="M3.500 3.500v-3h5v3.500h-2M.5 3.500h5v3h-5z" />
              <path d="M1.500 13h5l-2.500 2.500z" fill="#fff" stroke="none" />
            </svg>
          </TrayCell>
          <TrayCell $w={21}>
            <svg width="9" height="6" viewBox="0 0 9 6"><path d="M0 5.500L4.500 .5 9 5.500z" fill="#fff" stroke="#5b6b7d" strokeWidth=".5" /></svg>
          </TrayCell>
          <TrayCell>
            <svg width="16" height="16" viewBox="0 0 16 16">
              <path d="M0 1h16v12H8l-4 3v-3H0z" fill="#1b9ac4" />
              <path d="M3 4l2.500 5M8 4l-3.500 8M10 5h4M10 8h4M11 11h3" stroke="#fff" strokeWidth="1.400" fill="none" />
            </svg>
          </TrayCell>
          <TrayCell>
            <svg width="16" height="16" viewBox="0 0 16 16">
              <path d="M12 0L4 3 0 10l3 4 5 .5V10H6l-2 1V8l3-3 6-2z" fill="#dd1d12" />
              <rect x="6" y="8" width="10" height="7.500" rx="1" fill="#fbe3b0" stroke="#b98438" strokeWidth=".8" />
              <path d="M6 8.500l5 4 5-4" fill="none" stroke="#b98438" />
            </svg>
          </TrayCell>
          <TrayCell>
            <svg width="16" height="16" viewBox="0 0 16 16">
              <rect width="16" height="15" rx="2" fill="#2f9fe8" />
              <circle cx="5.500" cy="6" r="2.500" fill="none" stroke="#fff" strokeWidth="1.500" />
              <circle cx="11.500" cy="5" r="2" fill="none" stroke="#fff" strokeWidth="1.300" />
              <circle cx="11.500" cy="11.500" r="4.500" fill="#e23b3b" />
              <path d="M9 11.500h5" stroke="#fff" strokeWidth="1.600" />
            </svg>
          </TrayCell>
          <TrayCell>
            <svg width="16" height="16" viewBox="0 0 16 16">
              <path d="M2.500 7Q2 0 7.500 0Q12.500 0 12.500 7L14 12Q8 16 1 12z" fill="#111" />
              <path d="M4 8h7l-1 6h-5z" fill="#fff" />
              <path d="M3 7h9v2h-9z" fill="#e02020" />
              <path d="M5.500 4.500h4l-2 1.500z" fill="#f5a41c" />
              <rect x="7" y="7.500" width="9" height="6.500" rx="1" fill="#f2b13c" stroke="#9b651b" strokeWidth=".7" />
            </svg>
          </TrayCell>
          <TrayCell>
            <svg width="16" height="16" viewBox="0 0 16 16">
              <circle cx="8" cy="8" r="7.800" fill="#3aaa35" />
              <path d="M1 10A7.500 7.500 0 0 1 14 4L12 12Q5 15 1 10z" fill="#f8e11e" />
              <path d="M8 4.500v7M4.500 8h7" stroke="#174d12" strokeWidth="2.400" />
            </svg>
          </TrayCell>
          <TrayCell>
            <svg width="16" height="16" viewBox="0 0 16 16">
              <path d="M8 1Q16 1 15.500 6.500Q15 11 10 12l-2 3.500L7 12Q1 11 .5 6.500Q0 1 8 1z" fill="#ececec" stroke="#777" strokeWidth=".8" />
              <path d="M4 10V4l4 3.500L12 4v6" fill="none" stroke="#d22c22" strokeWidth="1.700" />
            </svg>
          </TrayCell>
          <TrayCell>
            <svg width="16" height="16" viewBox="0 0 16 16" fill="none" stroke="#fff" strokeWidth="1.300">
              <path d="M5.500 4.500h9.500v7.500h-9.500zM7 14.500h7M10.200 12v2.500" />
              <path d="M1 .5v4h4v-4M3 4.500v9h2" />
            </svg>
          </TrayCell>
          <TrayCell>
            <svg width="16" height="16" viewBox="0 0 16 16" fill="none" stroke="#fff" strokeWidth="1.200">
              <path d="M1 5.500h2.500L7.500 2v12L3.500 10.500H1z" fill="#d9dee4" />
              <path d="M9.500 5.500q1.500 2.500 0 5M11.500 3.500q3 4.500 0 9" />
            </svg>
          </TrayCell>
          <Clock>
            <span>11:27</span>
            <span>2013/11/21</span>
          </Clock>
          <ShowDesktop />
        </Tray>
      </Taskbar>

      <SideTab>
        <SideTabIcon><FaVolumeUp size={17} /></SideTabIcon>
        <SideTabText>咨询和建议</SideTabText>
      </SideTab>
      <Annotations />
    </Desktop>
  );
}
